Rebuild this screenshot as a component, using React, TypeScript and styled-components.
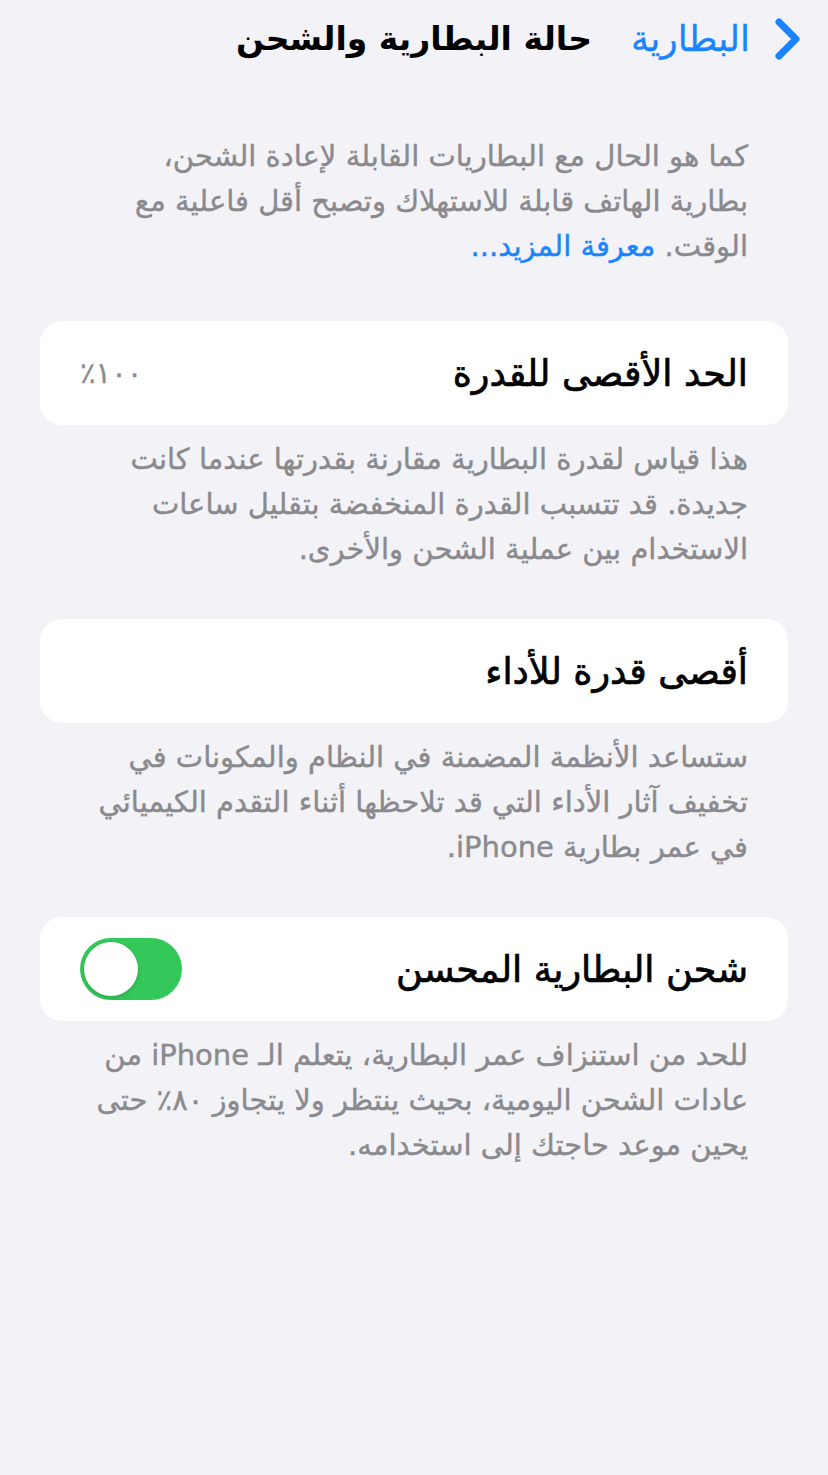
import React from "react";
import styled, { createGlobalStyle } from "styled-components";

const GlobalStyle = createGlobalStyle`
  html, body {
    margin: 0;
    padding: 0;
    background: #f2f2f7;
  }
  body {
    font-family: "DejaVu Sans", "Noto Sans", sans-serif;
    -webkit-font-smoothing: antialiased;
  }
`;

// each footer is split into the lines the reference shows
const intro = [
  "كما هو الحال مع البطاريات القابلة لإعادة الشحن،",
  "بطارية الهاتف قابلة للاستهلاك وتصبح أقل فاعلية مع",
];

const sections = [
  {
    label: "الحد الأقصى للقدرة",
    value: "١٠٠٪",
    footer: [
      "هذا قياس لقدرة البطارية مقارنة بقدرتها عندما كانت",
      "جديدة. قد تتسبب القدرة المنخفضة بتقليل ساعات",
      "الاستخدام بين عملية الشحن والأخرى.",
    ],
  },
  {
    label: "أقصى قدرة للأداء",
    footer: [
      "ستساعد الأنظمة المضمنة في النظام والمكونات في",
      "تخفيف آثار الأداء التي قد تلاحظها أثناء التقدم الكيميائي",
      "في عمر بطارية iPhone.",
    ],
  },
  {
    label: "شحن البطارية المحسن",
    toggle: true,
    footer: [
      "للحد من استنزاف عمر البطارية، يتعلم الـ iPhone من",
      "عادات الشحن اليومية، بحيث ينتظر ولا يتجاوز ٨٠٪ حتى",
      "يحين موعد حاجتك إلى استخدامه.",
    ],
  },
];

export default function App() {
  return (
    <>
      <GlobalStyle />
      <Page dir="rtl">
        <NavBar>
          <BackButton>
            <Chevron viewBox="0 0 28 44">
              <path d="M5 5 L22 22 L5 39" />
            </Chevron>
            <BackLabel>البطارية</BackLabel>
          </BackButton>
          <Title>حالة البطارية والشحن</Title>
          <span />
        </NavBar>

        <Content>
          <Intro>
            {intro.map((l) => (
              <Line key={l}>{l}</Line>
            ))}
            <Line>
              الوقت. <Link>معرفة المزيد...</Link>
            </Line>
          </Intro>

          {sections.map((s) => (
            <Section key={s.label}>
              <Card>
                <Label>{s.label}</Label>
                {s.value && <Value>{s.value}</Value>}
                {s.toggle && (
                  <Toggle $on>
                    <Knob />
                  </Toggle>
                )}
              </Card>
              <Footer>
                {s.footer.map((l) => (
                  <Line key={l}>{l}</Line>
                ))}
              </Footer>
            </Section>
          ))}
        </Content>
      </Page>
    </>
  );
}

const Page = styled.div`
  min-height: 1475px;
  background: #f2f2f7;
`;

const NavBar = styled.div`
  height: 78px;
  padding: 0 26px;
  display: grid;
  grid-template-columns: 1fr auto 1fr;
  align-items: center;
`;

const BackButton = styled.div`
  display: flex;
  align-items: center;
  gap: 24px;
  color: #1a84ff;
`;

const Chevron = styled.svg`
  width: 28px;
  height: 44px;

  path {
    fill: none;
    stroke: #1a84ff;
    stroke-width: 7;
    stroke-linecap: round;
    stroke-linejoin: round;
  }
`;

const BackLabel = styled.span`
  font-size: 36px;
  line-height: 40px;
  -webkit-text-stroke: 0.3px #1a84ff;
`;

const Title = styled.h1`
  margin: 0;
  font-size: 33px;
  font-weight: bold;
  color: #000;
  line-height: 40px;
`;

const Content = styled.div`
  padding: 56px 40px 0;
  display: flex;
  flex-direction: column;
  gap: 47px;
`;

const Intro = styled.p`
  margin: 0 0 5px;
  padding: 0 40px;
  font-size: 29px;
  line-height: 45px;
  color: #8a8a8e;
  -webkit-text-stroke: 0.4px #8a8a8e;
`;

const Line = styled.span`
  display: block;
  white-space: nowrap;
`;

const Link = styled.span`
  color: #1a84ff;
  -webkit-text-stroke: 0.4px #1a84ff;
`;

const Section = styled.div`
  display: flex;
  flex-direction: column;
  gap: 12px;
`;

const Card = styled.div`
  height: 104px;
  padding: 0 40px;
  background: #fff;
  border-radius: 22px;
  display: flex;
  align-items: center;
  justify-content: space-between;
`;

const Label = styled.span`
  font-size: 36.5px;
  color: #000;
  -webkit-text-stroke: 0.7px #000;
`;

const Value = styled.span`
  font-size: 29px;
  color: #8a8a8e;
  letter-spacing: 1px;
  -webkit-text-stroke: 0.3px #8a8a8e;
`;

const Toggle = styled.div<{ $on?: boolean }>`
  width: 102px;
  height: 62px;
  border-radius: 31px;
  padding: 4px;
  box-sizing: border-box;
  background: ${(p) => (p.$on ? "#34c759" : "#e9e9eb")};
  display: flex;
  justify-content: ${(p) => (p.$on ? "flex-end" : "flex-start")};
`;

const Knob = styled.div`
  width: 54px;
  height: 54px;
  border-radius: 50%;
  background: #fff;
  box-shadow: 0 2px 4px rgba(0, 0, 0, 0.15);
`;

const Footer = styled.p`
  margin: 0;
  padding: 0 40px;
  font-size: 29px;
  line-height: 45px;
  color: #8a8a8e;
  -webkit-text-stroke: 0.4px #8a8a8e;
`;
